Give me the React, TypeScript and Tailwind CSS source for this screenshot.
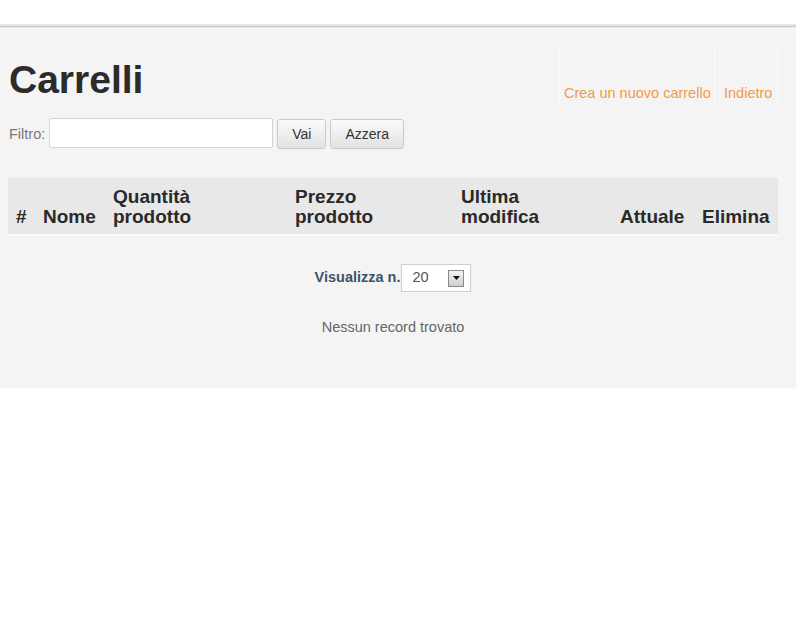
import React from "react";

const columns = [
  { label: ["#"], w: "w-[27px]" },
  { label: ["Nome"], w: "w-[70px]" },
  { label: ["Quantità", "prodotto"], w: "w-[182px]" },
  { label: ["Prezzo", "prodotto"], w: "w-[166px]" },
  { label: ["Ultima", "modifica"], w: "w-[159px]" },
  { label: ["Attuale"], w: "w-[82px]" },
  { label: ["Elimina"], w: "w-[84px]" },
];

function SelectArrow() {
  return (
    <span className="flex h-[17px] w-[16px] items-center justify-center border border-[#8a8a8a] bg-gradient-to-b from-[#f4f4f4] to-[#cfcfcf]">
      <svg width="7" height="4" viewBox="0 0 7 4">
        <path d="M0 0h7L3.5 4z" fill="#111" />
      </svg>
    </span>
  );
}

export default function App() {
  return (
    <div className="min-h-[620px] bg-white font-['Liberation_Sans',Arial,sans-serif]">
      <div className="h-6 bg-white" />
      <div className="h-[2px] bg-[#e6e6e6]" />
      <div className="h-px bg-[#c9c9c9]" />
      <div className="h-px bg-[#ebebeb]" />

      <section className="h-[360px] bg-[#f4f4f4] pl-2 pr-[18px] pt-[17px]">
        <div className="flex items-start justify-between">
          <h1 className="pl-px pt-[13px] text-[39px] font-bold leading-[44px] text-[#2b2b2b]">
            Carrelli
          </h1>
          <div className="flex gap-[3px]">
            <a className="flex h-[61px] w-[157px] items-end border border-[#f9f9f9] px-[4px] pb-[3px] text-[14.5px] leading-[18px] text-[#f29b43]">
              Crea un nuovo carrello
            </a>
            <a className="flex h-[61px] w-[59px] items-end border border-[#f9f9f9] px-[4px] pb-[3px] text-[14.5px] leading-[18px] text-[#f29b43]">
              Indietro
            </a>
          </div>
        </div>

        <form className="mt-[12px] flex items-start" onSubmit={(e) => e.preventDefault()}>
          <label className="pl-px pt-[7px] text-[14.5px] leading-[18px] text-[#777]">Filtro:</label>
          <input
            type="text"
            className="ml-[4px] h-[30px] w-[224px] rounded-[2px] border border-[#d4d4d4] bg-white outline-none"
          />
          <button className="ml-[4px] mt-px h-[30px] rounded-[3px] border border-[#c9c9c9] bg-gradient-to-b from-[#fbfbfb] to-[#e2e2e2] px-[14px] text-[14px] text-[#333]">
            Vai
          </button>
          <button className="ml-[4px] mt-px h-[30px] rounded-[3px] border border-[#c9c9c9] bg-gradient-to-b from-[#fbfbfb] to-[#e2e2e2] px-[14px] text-[14px] text-[#333]">
            Azzera
          </button>
        </form>

        <div className="mt-[29px] w-[770px]">
          <div className="flex h-[56px] bg-[#e8e8e8]">
            {columns.map((c) => (
              <div
                key={c.label.join(" ")}
                className={`${c.w} flex flex-col justify-end px-2 pb-[7px] text-[19px] font-bold leading-[20px] text-[#2a2a2a]`}
              >
                {c.label.map((l) => (
                  <span key={l}>{l}</span>
                ))}
              </div>
            ))}
          </div>
          <div className="h-[2px] bg-[#fafafa]" />

          <div className="mt-[28px] flex items-center justify-center">
            <span className="mr-px text-[14.5px] font-bold text-[#3b5566]">Visualizza n.</span>
            <div className="flex h-[28px] w-[70px] items-center justify-between border border-[#d0d0d0] bg-white pl-[10px] pr-[6px]">
              <span className="text-[14.5px] text-[#555]">20</span>
              <SelectArrow />
            </div>
          </div>

          <p className="mt-[25px] text-center text-[14.5px] text-[#666]">Nessun record trovato</p>
        </div>
      </section>
    </div>
  );
}
